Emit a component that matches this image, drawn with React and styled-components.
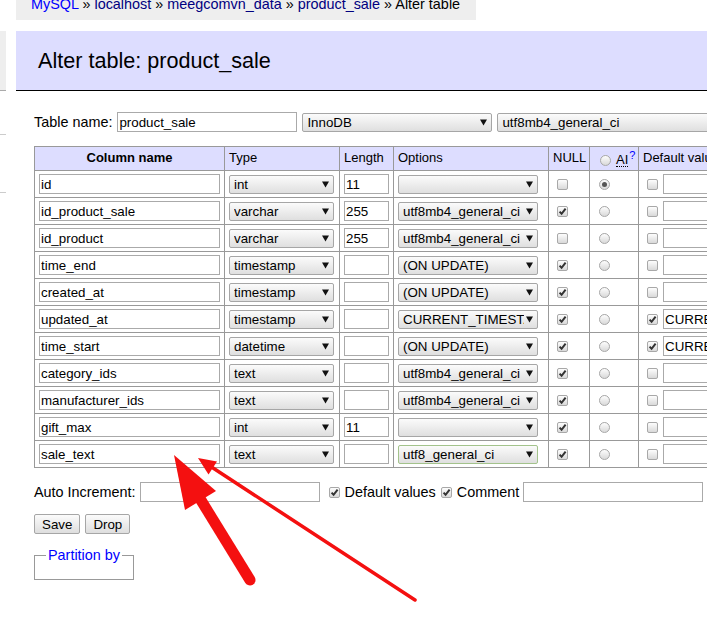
import React from 'react'
import styled, { createGlobalStyle } from 'styled-components'

const GlobalStyle = createGlobalStyle`
  html, body { margin: 0; padding: 0; background: #fff; }
  body { font: 14.4px/1.25 "Liberation Sans", Arial, sans-serif; color: #000; }
`;

const Page = styled.div`
  position: relative;
  display: flex;
  width: 707px;
  height: 634px;
  overflow: hidden;
`;

const Sidebar = styled.div`
  flex: 0 0 6px;
  display: flex;
  flex-direction: column;
`;

const MenuBlock = styled.div`
  margin-top: 31px;
  height: 59px;
  background: #eee;
  border-bottom: 1px solid #aaa;
`;

const MenuRule = styled.div`
  margin-top: ${p => p.$gap}px;
  border-top: 1px solid #ccc;
`;

const Content = styled.div`
  flex: 1;
  min-width: 0;
  margin-left: 10px;
`;

const Breadcrumb = styled.div`
  box-sizing: border-box;
  width: 460px;
  height: 20px;
  padding: 0 15px;
  background: #eee;
  overflow: hidden;
  white-space: nowrap;
`;

const Crumbs = styled.span`
  display: block;
  margin-top: -5px;
  line-height: 18px;
`;

const Link = styled.a`
  color: ${p => (p.$visited ? 'navy' : 'blue')};
  text-decoration: none;
`;

const Heading = styled.h2`
  margin: 11px 0 0;
  padding: 16px 22px;
  font-size: 21.6px;
  font-weight: normal;
  line-height: 27px;
  background: #ddf;
  border-bottom: 1px solid #000;
  white-space: nowrap;
`;

const Body = styled.div`
  padding-left: 18px;
`;

const NameRow = styled.div`
  display: flex;
  align-items: center;
  gap: 5px;
  margin-top: 21px;
  height: 20px;
  white-space: nowrap;
`;

const TextInput = styled.input`
  box-sizing: border-box;
  width: ${p => p.$w}px;
  height: 20px;
  flex: none;
  margin: 0;
  padding: 0 1px;
  border: 1px solid #aaa;
  font: 13.33px "Liberation Sans", Arial, sans-serif;
  color: #000;
  background: #fff;
  vertical-align: middle;
`;

const SelectBox = styled.div`
  display: inline-flex;
  align-items: center;
  box-sizing: border-box;
  width: ${p => p.$w}px;
  height: 19px;
  flex: none;
  padding: 0 4px;
  border: 1px solid ${p => (p.$changed ? '#a3c38c' : '#a6a6a6')};
  border-radius: 2px;
  background: linear-gradient(#fbfbfb, #dfdfdf);
  font: 13.33px "Liberation Sans", Arial, sans-serif;
  vertical-align: middle;
  white-space: nowrap;
`;

const SelectText = styled.span`
  flex: 1;
  overflow: hidden;
`;

const Caret = styled.svg`
  flex: none;
  margin-left: 2px;
`;

const Select = ({ w, value, changed }) => (
  <SelectBox $w={w} $changed={changed}>
    <SelectText>{value}</SelectText>
    <Caret width="7" height="7" viewBox="0 0 7 7">
      <polygon points="0,0.5 7,0.5 3.5,6.5" fill="#111" />
    </Caret>
  </SelectBox>
);

const Box = styled.span`
  display: inline-block;
  position: relative;
  box-sizing: border-box;
  width: 11px;
  height: 11px;
  flex: none;
  margin-left: ${p => p.$ml}px;
  border: 1px solid #a8a8a8;
  border-radius: ${p => (p.$round ? '50%' : '2px')};
  background: linear-gradient(#fdfdfd, #d9d9d9);
  vertical-align: middle;
`;

const Dot = styled.span`
  position: absolute;
  left: 2px;
  top: 2px;
  width: 5px;
  height: 5px;
  border-radius: 50%;
  background: #555;
`;

const Checkbox = ({ checked, ml = 4 }) => (
  <Box $ml={ml}>
    {checked && (
      <svg width="9" height="9" viewBox="0 0 9 9" style={{ display: 'block' }}>
        <path d="M1.6 4.6 L3.6 6.8 L7.6 1.6" fill="none" stroke="#333" strokeWidth="2" />
      </svg>
    )}
  </Box>
);

const Radio = ({ checked, ml = 5 }) => (
  <Box $round $ml={ml}>{checked && <Dot />}</Box>
);

const Grid = styled.table`
  margin-top: 14px;
  border-collapse: collapse;
  table-layout: fixed;
  width: 724px;
  font-size: 13px;
`;

const HeadCell = styled.td`
  height: 23px;
  padding: 0 4px;
  border: 1px solid #999;
  background: #ddf;
  text-align: ${p => (p.$center ? 'center' : 'left')};
  font-weight: ${p => (p.$bold ? 'bold' : 'normal')};
  white-space: nowrap;
  overflow: hidden;
`;

const Cell = styled.td`
  height: 26px;
  padding: 0 4px;
  border: 1px solid #999;
  white-space: nowrap;
  overflow: hidden;
  line-height: 20px;
`;

const AiLabel = styled.span`
  margin-left: 5px;
  border-bottom: 1px dotted #000;
  line-height: 13px;
  display: inline-block;
`;

const Help = styled.sup`
  color: blue;
  font-size: 11px;
  margin-left: 1px;
`;

const DefaultInput = styled(TextInput)`
  margin-left: 5px;
`;

const AutoRow = styled.div`
  display: flex;
  align-items: center;
  margin-top: 14px;
  height: 20px;
  white-space: nowrap;
`;

const CheckLabel = styled.label`
  display: inline-flex;
  align-items: center;
  gap: 5px;
  margin-left: ${p => p.$ml}px;
`;

const Buttons = styled.div`
  display: flex;
  gap: 5px;
  margin-top: 12px;
`;

const Button = styled.button`
  box-sizing: border-box;
  height: 20px;
  margin: 0;
  padding: 0 7px;
  border: 1px solid #a6a6a6;
  border-radius: 2px;
  background: linear-gradient(#fbfbfb, #dedede);
  font: 13.33px "Liberation Sans", Arial, sans-serif;
  color: #000;
`;

const Fieldset = styled.fieldset`
  display: inline-block;
  margin: 12px 0 0;
  padding: 0 11px 15px;
  border: 1px solid #999;
  min-width: 0;
`;

const Legend = styled.legend`
  padding: 0 2px;
  line-height: 18px;
`;

const Arrows = styled.svg`
  position: absolute;
  left: 0;
  top: 0;
  pointer-events: none;
`;

const fields = [
  { name: 'id', type: 'int', len: '11', opt: '', nul: false, ai: true, def: false, val: '' },
  { name: 'id_product_sale', type: 'varchar', len: '255', opt: 'utf8mb4_general_ci', nul: true },
  { name: 'id_product', type: 'varchar', len: '255', opt: 'utf8mb4_general_ci', nul: false },
  { name: 'time_end', type: 'timestamp', len: '', opt: '(ON UPDATE)', nul: true },
  { name: 'created_at', type: 'timestamp', len: '', opt: '(ON UPDATE)', nul: true },
  { name: 'updated_at', type: 'timestamp', len: '', opt: 'CURRENT_TIMESTAMP', nul: true, def: true, val: 'CURRENT_TIMESTAMP' },
  { name: 'time_start', type: 'datetime', len: '', opt: '(ON UPDATE)', nul: true, def: true, val: 'CURRENT_TIMESTAMP' },
  { name: 'category_ids', type: 'text', len: '', opt: 'utf8mb4_general_ci', nul: true },
  { name: 'manufacturer_ids', type: 'text', len: '', opt: 'utf8mb4_general_ci', nul: true },
  { name: 'gift_max', type: 'int', len: '11', opt: '', nul: true },
  { name: 'sale_text', type: 'text', len: '', opt: 'utf8_general_ci', nul: true, changed: true },
];

export default function App() {
  return (
    <Page>
      <GlobalStyle />
      <Sidebar>
        <MenuBlock />
        <MenuRule $gap={43} />
        <MenuRule $gap={57} />
      </Sidebar>
      <Content>
        <Breadcrumb>
          <Crumbs>
            <Link href="#">MySQL</Link> » <Link href="#" $visited>localhost</Link> »{' '}
            <Link href="#" $visited>meegcomvn_data</Link> » <Link href="#" $visited>product_sale</Link> » Alter table
          </Crumbs>
        </Breadcrumb>
        <Heading>Alter table: product_sale</Heading>
        <Body>
          <NameRow>
            <span>Table name:</span>
            <TextInput $w={180} defaultValue="product_sale" />
            <Select w={190} value="InnoDB" />
            <Select w={240} value="utf8mb4_general_ci" />
          </NameRow>

          <Grid>
            <colgroup>
              <col style={{ width: 190 }} />
              <col style={{ width: 115 }} />
              <col style={{ width: 54 }} />
              <col style={{ width: 155 }} />
              <col style={{ width: 41 }} />
              <col style={{ width: 49 }} />
              <col style={{ width: 120 }} />
            </colgroup>
            <thead>
              <tr>
                <HeadCell $center $bold>Column name</HeadCell>
                <HeadCell>Type</HeadCell>
                <HeadCell>Length</HeadCell>
                <HeadCell>Options</HeadCell>
                <HeadCell>NULL</HeadCell>
                <HeadCell>
                  <Radio ml={6} />
                  <AiLabel>AI</AiLabel>
                  <Help>?</Help>
                </HeadCell>
                <HeadCell>Default values</HeadCell>
              </tr>
            </thead>
            <tbody>
              {fields.map(f => (
                <tr key={f.name}>
                  <Cell><TextInput $w={181} defaultValue={f.name} /></Cell>
                  <Cell><Select w={105} value={f.type} /></Cell>
                  <Cell><TextInput $w={45} defaultValue={f.len} /></Cell>
                  <Cell><Select w={140} value={f.opt} changed={f.changed} /></Cell>
                  <Cell><Checkbox checked={f.nul} /></Cell>
                  <Cell><Radio checked={f.ai} /></Cell>
                  <Cell>
                    <Checkbox checked={f.def} />
                    <DefaultInput $w={100} defaultValue={f.val || ''} />
                  </Cell>
                </tr>
              ))}
            </tbody>
          </Grid>

          <AutoRow>
            <span>Auto Increment:</span>
            <TextInput $w={180} style={{ marginLeft: 4 }} />
            <CheckLabel $ml={9}><Checkbox checked ml={0} />Default values</CheckLabel>
            <CheckLabel $ml={5}><Checkbox checked ml={0} />Comment</CheckLabel>
            <TextInput $w={180} style={{ marginLeft: 4 }} />
          </AutoRow>

          <Buttons>
            <Button>Save</Button>
            <Button>Drop</Button>
          </Buttons>

          <Fieldset>
            <Legend><Link href="#">Partition by</Link></Legend>
          </Fieldset>
        </Body>
      </Content>

      <Arrows width="707" height="634" viewBox="0 0 707 634">
        <line x1="250" y1="580" x2="199" y2="497" stroke="#f41010" strokeWidth="11" strokeLinecap="round" />
        <polygon points="174,455 185,510 216,491" fill="#f41010" />
        <line x1="415" y1="600" x2="210" y2="466" stroke="#f41010" strokeWidth="3.5" strokeLinecap="round" />
        <polygon points="198,458 217,461.5 208.5,474.5" fill="#f41010" />
      </Arrows>
    </Page>
  );
}
